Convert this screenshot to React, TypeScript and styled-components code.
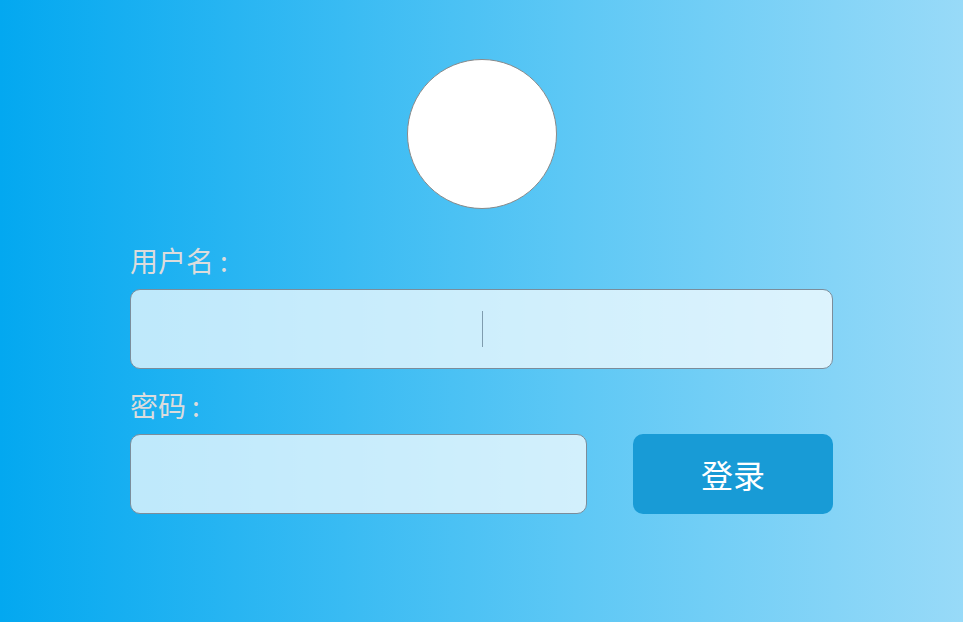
import React from "react";
import styled, { createGlobalStyle } from "styled-components";

const GlobalStyle = createGlobalStyle`
    html, body {
        margin: 0;
        padding: 0;
        height: 100%;
    }
    body {
        font-family: "Noto Sans CJK SC", "Noto Sans", sans-serif;
        background: linear-gradient(to right, #03a8f0 0%, #5ec8f5 60%, #98daf8 100%);
        overflow: hidden;
    }
    #root {
        min-height: 100vh;
    }
`

const Page = styled.div`
    display: flex;
    flex-direction: column;
    align-items: center;
    padding-top: 59px;
    min-height: 100vh;
    box-sizing: border-box;
`

const Avatar = styled.div`
    width: 150px;
    height: 150px;
    box-sizing: border-box;
    border-radius: 50%;
    background: #fff;
    border: 1px solid #8a8a8a;
`

const Form = styled.form`
    width: 703px;
    margin-top: 34px;
    display: flex;
    flex-direction: column;
    gap: 19px;
`

const Field = styled.div`
    display: flex;
    flex-direction: column;
    gap: 6px;
`

const Label = styled.label`
    color: #dcdcdc;
    font-size: 28px;
    line-height: 34px;
    height: 40px;
`

const Colon = styled.span`
    margin-left: 6px;
`

const Row = styled.div`
    display: flex;
    align-items: center;
    justify-content: space-between;
`

const InputBox = styled.div<{ $width: number }>`
    position: relative;
    width: ${p => p.$width}px;
    height: 80px;
`

const Input = styled.input`
    width: 100%;
    height: 100%;
    box-sizing: border-box;
    border: 1px solid #7b8d9b;
    border-radius: 10px;
    background: rgba(255, 255, 255, 0.72);
    outline: none;
    font-family: inherit;
    font-size: 30px;
    text-align: center;
    color: #333;
`

const Caret = styled.span`
    position: absolute;
    left: 50%;
    top: 22px;
    width: 1px;
    height: 36px;
    background: #7f9cae;
`

const Button = styled.button`
    width: 200px;
    height: 80px;
    border: none;
    border-radius: 10px;
    background: #189bd6;
    color: #fff;
    font-family: inherit;
    font-size: 32px;
    cursor: pointer;
`

const App = () => {
    return (
        <>
            <GlobalStyle />
            <Page>
                <Avatar />
                <Form onSubmit={e => e.preventDefault()}>
                    <Field>
                        <Label>用户名<Colon>:</Colon></Label>
                        <InputBox $width={703}>
                            <Input type="text" />
                            <Caret />
                        </InputBox>
                    </Field>
                    <Field>
                        <Label>密码<Colon>:</Colon></Label>
                        <Row>
                            <InputBox $width={457}>
                                <Input type="password" />
                            </InputBox>
                            <Button type="submit">登录</Button>
                        </Row>
                    </Field>
                </Form>
            </Page>
        </>
    );
};

export default App;
